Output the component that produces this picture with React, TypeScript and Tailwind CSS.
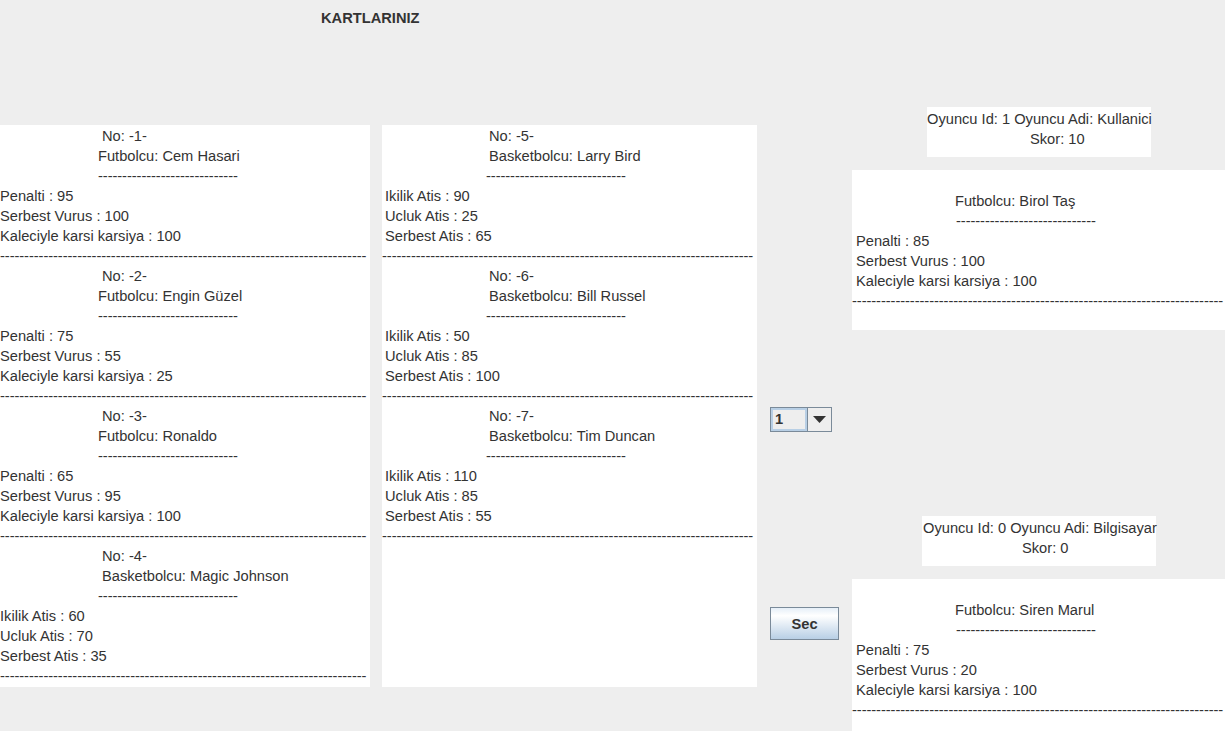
import React from "react";

type Card = {
  no: number;
  kind: "Futbolcu" | "Basketbolcu";
  name: string;
  stats: [string, number][];
};

const foot = (no: number, name: string, p: number, s: number, k: number): Card => ({
  no,
  kind: "Futbolcu",
  name,
  stats: [
    ["Penalti", p],
    ["Serbest Vurus", s],
    ["Kaleciyle karsi karsiya", k],
  ],
});

const basket = (no: number, name: string, i: number, u: number, s: number): Card => ({
  no,
  kind: "Basketbolcu",
  name,
  stats: [
    ["Ikilik Atis", i],
    ["Ucluk Atis", u],
    ["Serbest Atis", s],
  ],
});

const LEFT_CARDS: Card[] = [
  foot(1, "Cem Hasari", 95, 100, 100),
  foot(2, "Engin Güzel", 75, 55, 25),
  foot(3, "Ronaldo", 65, 95, 100),
  basket(4, "Magic Johnson", 60, 70, 35),
];

const MID_CARDS: Card[] = [
  basket(5, "Larry Bird", 90, 25, 65),
  basket(6, "Bill Russel", 50, 85, 100),
  basket(7, "Tim Duncan", 110, 85, 55),
];

const SHORT = "-".repeat(29);
const LONG_76 = "-".repeat(76);
const LONG_77 = "-".repeat(77);

const line = "h-[20px] leading-[22px] whitespace-pre";
const dash = "h-[20px] leading-[22px] whitespace-pre tracking-[-0.06px]";

function LeftCard({ c }: { c: Card }) {
  return (
    <div>
      <div className={`${line} pl-[102px]`}>No: -{c.no}-</div>
      <div className={`${line} ${c.kind === "Futbolcu" ? "pl-[98px]" : "pl-[102px]"}`}>
        {c.kind}: {c.name}
      </div>
      <div className={`${dash} pl-[98px]`}>{SHORT}</div>
      {c.stats.map(([k, v]) => (
        <div key={k} className={line}>
          {k} : {v}
        </div>
      ))}
      <div className={dash}>{LONG_76}</div>
    </div>
  );
}

function MidCard({ c }: { c: Card }) {
  return (
    <div>
      <div className={`${line} pl-[107px]`}>No: -{c.no}-</div>
      <div className={`${line} pl-[107px]`}>
        {c.kind}: {c.name}
      </div>
      <div className={`${dash} pl-[104px]`}>{SHORT}</div>
      {c.stats.map(([k, v]) => (
        <div key={k} className={`${line} pl-[3px]`}>
          {k} : {v}
        </div>
      ))}
      <div className={dash}>{LONG_77}</div>
    </div>
  );
}

function PlayedCard({ name, p, s, k }: { name: string; p: number; s: number; k: number }) {
  return (
    <div className="h-[160px] w-[373px] overflow-hidden bg-white">
      <div className={line}> </div>
      <div className={`${line} pl-[103px]`}>Futbolcu: {name}</div>
      <div className={`${dash} pl-[104px]`}>{SHORT}</div>
      <div className={`${line} pl-[4px]`}>Penalti : {p}</div>
      <div className={`${line} pl-[4px]`}>Serbest Vurus : {s}</div>
      <div className={`${line} pl-[4px]`}>Kaleciyle karsi karsiya : {k}</div>
      <div className={dash}>{LONG_77}</div>
    </div>
  );
}

export default function App() {
  return (
    <div className="relative h-[731px] w-[1225px] overflow-hidden bg-[#eeeeee] font-['Liberation_Sans',Arial,sans-serif] text-[14.67px] text-[#333333]">
      <div className="h-[27px] pt-[7px] pl-[321px]">
        <div className="h-[20px] font-bold leading-[22px]">KARTLARINIZ</div>
      </div>

      <div className="mt-[80px] flex items-start">
        {/* sol kartlar */}
        <div className="mt-[18px] h-[562px] w-[370px] overflow-hidden bg-white">
          {LEFT_CARDS.map((c) => (
            <LeftCard key={c.no} c={c} />
          ))}
        </div>

        {/* orta kartlar */}
        <div className="ml-[12px] mt-[18px] h-[562px] w-[375px] overflow-hidden bg-white">
          {MID_CARDS.map((c) => (
            <MidCard key={c.no} c={c} />
          ))}
        </div>

        {/* secim */}
        <div className="ml-[13px] flex w-[69px] flex-col">
          <div className="mt-[300px] flex h-[25px] w-[62px] border border-[#7a8a99] bg-[#eeeeee]">
            <div className="flex flex-1 items-center border-2 border-[#b8cfe5] pl-[2px] text-[14.67px] font-bold leading-none">
              1
            </div>
            <div className="flex w-[24px] items-center justify-center border-l border-[#7a8a99] bg-[#eeeeee]">
              <svg width="13" height="7" viewBox="0 0 13 7">
                <path d="M0 0H13L6.5 7Z" fill="#333333" />
              </svg>
            </div>
          </div>
          <button className="mt-[175px] h-[33px] w-[69px] border border-[#7a8a99] bg-gradient-to-b from-[#e6eff8] via-white via-25% to-[#b8cfe5] pt-[1px] text-[14.67px] font-bold text-[#333333]">
            Sec
          </button>
        </div>

        {/* oyuncular */}
        <div className="ml-[13px] flex w-[373px] flex-col">
          <div className="ml-[75px] h-[50px] w-[224px] bg-white pt-[1px]">
            <div className={line}>Oyuncu Id: 1 Oyuncu Adi: Kullanici</div>
            <div className={`${line} pl-[103px]`}>Skor: 10</div>
          </div>
          <div className="mt-[13px]">
            <PlayedCard name="Birol Taş" p={85} s={100} k={100} />
          </div>
          <div className="ml-[70px] mt-[186px] h-[50px] w-[234px] bg-white pt-[1px]">
            <div className={`${line} pl-[1px]`}>Oyuncu Id: 0 Oyuncu Adi: Bilgisayar</div>
            <div className={`${line} pl-[100px]`}>Skor: 0</div>
          </div>
          <div className="mt-[13px]">
            <PlayedCard name="Siren Marul" p={75} s={20} k={100} />
          </div>
        </div>
      </div>
    </div>
  );
}
